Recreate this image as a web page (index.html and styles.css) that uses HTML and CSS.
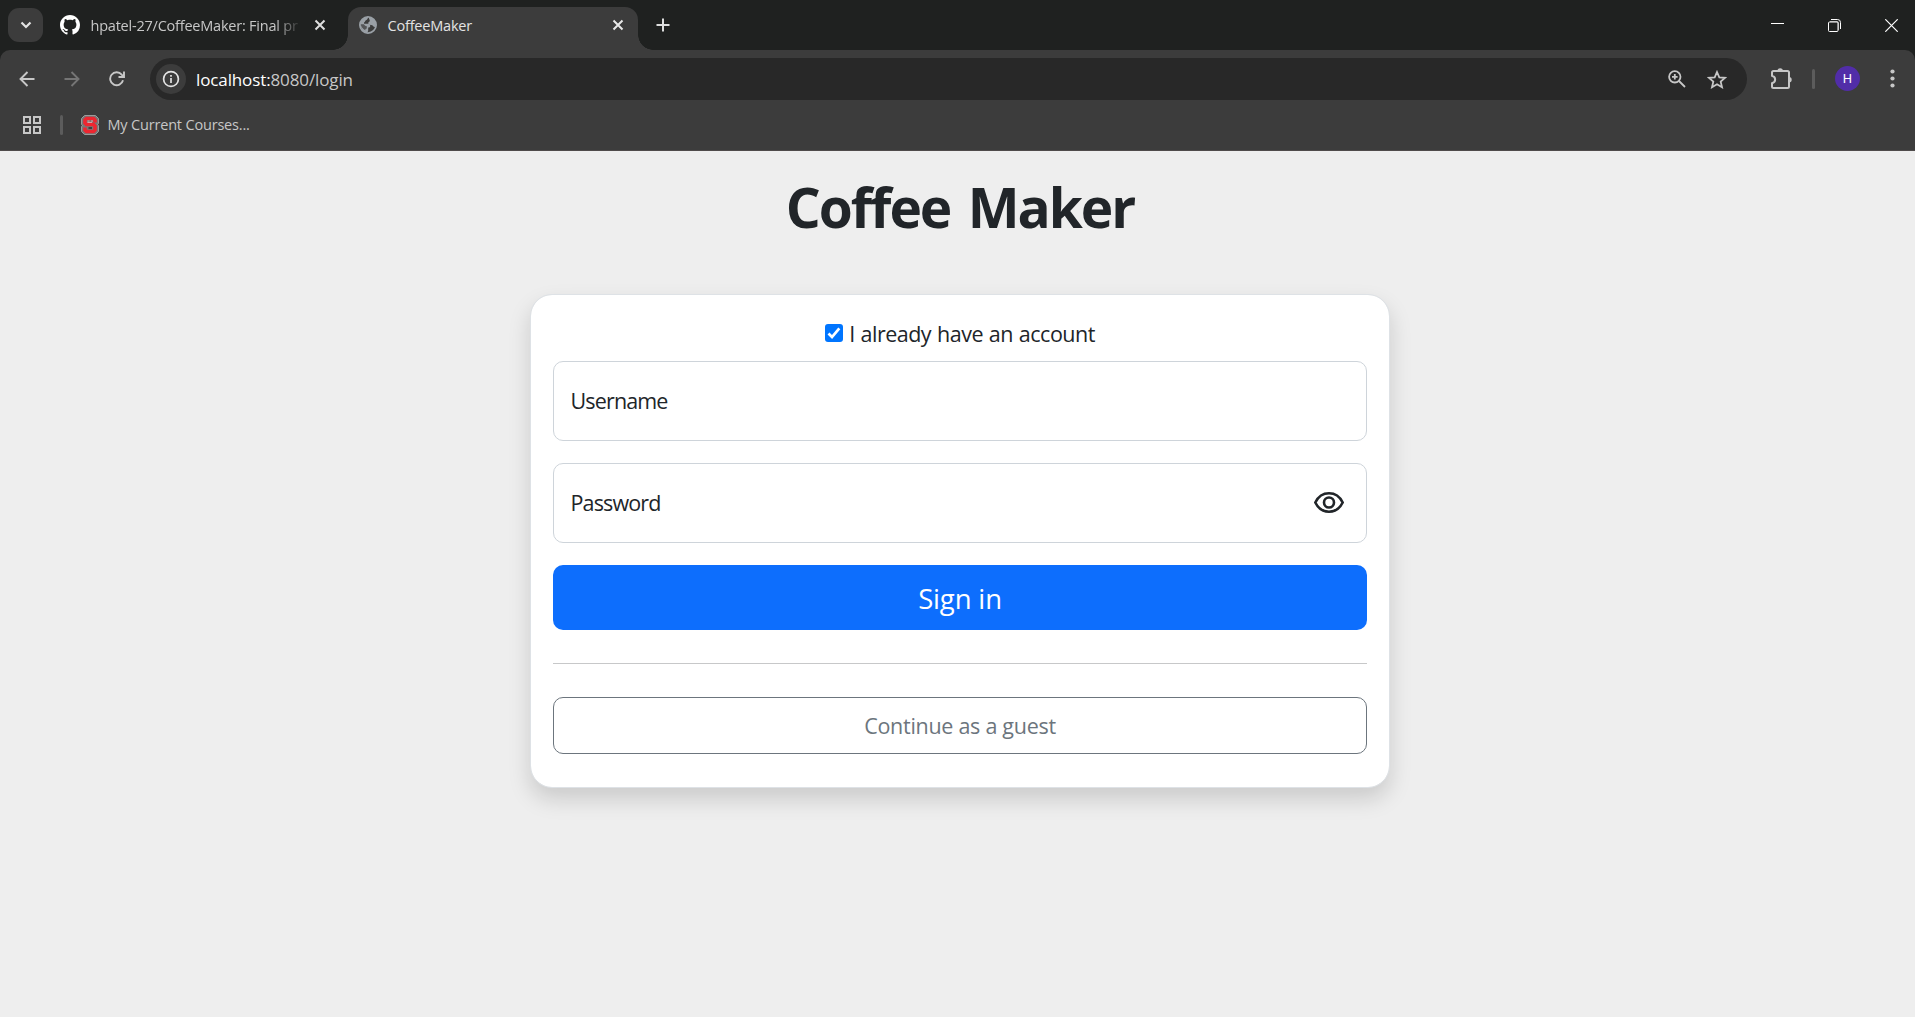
FILE: index.html
```html
<!DOCTYPE html>
<html lang="en">
<head>
<meta charset="utf-8">
<title>CoffeeMaker</title>
<link rel="stylesheet" href="styles.css">
</head>
<body>
<header class="browser">
  <div class="tabstrip">
    <button class="tab-search" aria-label="Search tabs"><svg width="12" height="12" viewBox="0 0 12 12"><path d="M1.5 3.5 6 8l4.500-4.500" fill="none" stroke="#e3e3e3" stroke-width="2.200"/></svg></button>
    <div class="tab">
      <svg class="favicon" width="20" height="20" viewBox="0 0 16 16" fill="#fff"><path d="M8 0C3.58 0 0 3.58 0 8c0 3.54 2.29 6.53 5.47 7.59.4.07.55-.17.55-.38 0-.19-.01-.82-.01-1.49-2.01.37-2.53-.49-2.69-.94-.09-.23-.48-.94-.82-1.13-.28-.15-.68-.52-.01-.53.63-.01 1.08.58 1.23.82.72 1.21 1.87.87 2.33.66.07-.52.28-.87.51-1.07-1.78-.2-3.64-.89-3.64-3.95 0-.87.31-1.59.82-2.15-.08-.2-.36-1.02.08-2.12 0 0 .67-.21 2.2.82.64-.18 1.32-.27 2-.27s1.36.09 2 .27c1.53-1.04 2.2-.82 2.2-.82.44 1.1.16 1.92.08 2.12.51.56.82 1.27.82 2.15 0 3.07-1.87 3.75-3.65 3.95.29.25.54.73.54 1.48 0 1.07-.01 1.93-.01 2.2 0 .21.15.46.55.38A8.01 8.01 0 0 0 16 8c0-4.42-3.58-8-8-8z"/></svg>
      <span class="tab-title tab-title-faded">hpatel-27/CoffeeMaker: Final pr</span>
      <svg class="tab-close" width="12" height="12" viewBox="0 0 12 12"><path d="m1.500 1.500 9 9m0-9-9 9" stroke="#dedede" stroke-width="2"/></svg>
    </div>
    <div class="tab tab-active">
      <svg class="favicon" width="18" height="18" viewBox="0 0 18 18"><circle cx="9" cy="9" r="8.100" fill="#3c3c3c" stroke="#9aa0a6" stroke-width="1.800"/><path d="M1.500 8.500C1.300 4.500 4.500 1 9 1c-.1 1.700-.6 2.900-2 3.200C5.800 4.500 6.500 6 5 6.500v1.300h4.500c1.200 0 1.700 1 1.700 2.200 0 1-.8 1.500-2 1.500v3c0 1.200-.8 2-2.200 2.200C4 15.500 1.700 12.500 1.500 8.500z" fill="#9aa0a6"/><path d="M1.800 8.300h3c1 1.300 1.500 2 3 2v2.200c-1.200 0-1.500.8-1.500 1.800-2.200-1.300-4.300-3.300-4.500-6z" fill="#3c3c3c" opacity=".75"/><path d="M10 1.200c4 .3 7 3.300 7 7.600-.2 1.300-.7 2.200-1.500 2.200-1.200 0-1.200-1.300-2.300-1.700-1.400-.4-3.700-.1-4-2C9 5.800 10.800 6 10.800 4.800 10.800 3.500 9.700 3 10 1.200z" fill="#9aa0a6"/></svg>
      <span class="tab-title">CoffeeMaker</span>
      <svg class="tab-close" width="12" height="12" viewBox="0 0 12 12"><path d="m1.500 1.500 9 9m0-9-9 9" stroke="#e8e8e8" stroke-width="2"/></svg>
    </div>
    <svg class="new-tab" width="14" height="14" viewBox="0 0 14 14"><path d="M7 .5v13M.5 7h13" stroke="#dedede" stroke-width="2"/></svg>
    <div class="window-controls">
      <svg width="13" height="13" viewBox="0 0 13 13"><path d="M0 4.500h13" stroke="#fff"/></svg>
      <svg width="13" height="13" viewBox="0 0 13 13" fill="none" stroke="#fff"><path d="M3 .5h6.500a3 3 0 0 1 3 3V10"/><path d="M2 2.500h7a1.500 1.500 0 0 1 1.500 1.500v7" stroke="#999"/><rect x=".5" y="3" width="9.500" height="9.500" rx="1"/></svg>
      <svg width="13" height="13" viewBox="0 0 13 13"><path d="m.3.3 12.400 12.400m0-12.400L.3 12.700" stroke="#fff" stroke-width="1.200"/></svg>
    </div>
  </div>
  <div class="toolbar">
    <div class="nav-row">
      <div class="nav-buttons">
        <svg width="16" height="16" viewBox="0 0 16 16"><path d="M15.500 8H2M8.500 1 1.500 8l7 7" fill="none" stroke="#c7c7c7" stroke-width="1.900"/></svg>
        <svg width="16" height="16" viewBox="0 0 16 16"><path d="M.5 8H14M7.500 1l7 7-7 7" fill="none" stroke="#757575" stroke-width="1.900"/></svg>
        <svg width="16" height="16" viewBox="0 0 16 16"><path d="M14 9.300A6.500 6.500 0 1 1 12.700 3.600L14.300 5.300M15 .5V6H9.500" fill="none" stroke="#c7c7c7" stroke-width="1.900"/></svg>
      </div>
      <div class="omnibox">
        <span class="site-info"><svg width="18" height="18" viewBox="0 0 18 18"><circle cx="9" cy="9" r="7.400" fill="none" stroke="#e3e3e3" stroke-width="1.700"/><path d="M9 8v5M9 5v1.700" stroke="#e3e3e3" stroke-width="1.700"/></svg></span>
        <span class="url"><span class="url-host">localhost:</span>8080/login</span>
        <svg class="zoom-icon" width="18" height="18" viewBox="0 0 18 18"><g fill="none" stroke="#c7c7c7" stroke-width="1.800"><circle cx="6.800" cy="6.800" r="5.700"/><path d="m11 11 6 6M6.800 4v5.600M4 6.800h5.600"/></g></svg>
        <svg class="star-icon" width="20" height="19" viewBox="0 0 20 19"><path d="m10 2 2.300 5.300 5.700.5-4.300 3.800 1.300 5.600-5-3-5 3 1.300-5.600L2 7.800l5.700-.5z" fill="none" stroke="#c7c7c7" stroke-width="1.800"/></svg>
      </div>
      <svg class="extensions" width="22" height="22" viewBox="0 0 22 22"><path d="M3.500 3h14A1.500 1.500 0 0 1 19 4.500v14a1.500 1.500 0 0 1-1.500 1.500h-14A1.500 1.500 0 0 1 2 18.500v-3.300c4.200-1 4.200-6.400 0-7.400V4.500A1.500 1.500 0 0 1 3.500 3z" fill="none" stroke="#c7c7c7" stroke-width="2"/><path d="M7.500 3a2.700 2.700 0 0 1 5.400 0zM19 9a2.700 2.700 0 0 1 0 5.400z" fill="#c7c7c7"/></svg>
      <span class="separator"></span>
      <span class="avatar">H</span>
      <svg class="menu-dots" width="5" height="19" viewBox="0 0 5 19" fill="#c7c7c7"><circle cx="2.500" cy="2.500" r="2.100"/><circle cx="2.500" cy="9.500" r="2.100"/><circle cx="2.500" cy="16.500" r="2.100"/></svg>
    </div>
    <div class="bookmarks">
      <svg width="18" height="18" viewBox="0 0 18 18" fill="none" stroke="#c7c7c7" stroke-width="2"><path d="M1 1h6v6H1zM11 1h6v6h-6zM1 11h6v6H1zM11 11h6v6h-6z"/></svg>
      <span class="separator"></span>
      <svg class="bookmark-logo" width="18" height="20" viewBox="0 0 18 20"><path d="M3.500.5h11l3 3v5l-1 .7 1 1.300v6l-3 3h-11l-3-3v-5l1-.7-1-1.300v-6z" fill="#777" stroke="#9b9b9b"/><path d="M14 7.500V5l-1.500-1.500h-7L4 5v3l1.500 1.500h7L14 11v4l-1.500 1.500h-7L4 15v-2.500" fill="none" stroke="#ee2630" stroke-width="3.600"/><path d="M6.500 6h2M10 6h2M6.500 7.500h4.500" stroke="#d9a0a3"/><path d="M7.500 13h3.500" stroke="#222" stroke-width="1.300"/></svg>
      <span class="bookmark-title">My Current Courses...</span>
    </div>
  </div>
</header>
<main class="page">
  <h1 class="title">Coffee Maker</h1>
  <form class="card">
    <label class="account-check"><span class="checkbox"><svg width="18" height="18" viewBox="0 0 18 18"><path d="m3.500 9.500 3.500 3.500 7.300-8.700" fill="none" stroke="#fff" stroke-width="2.700"/></svg></span><span class="account-text">I already have an account</span></label>
    <div class="field"><span class="field-label">Username</span></div>
    <div class="field"><span class="field-label">Password</span><svg class="eye" width="30" height="21" viewBox="0 0 30 21" fill="none" stroke="#212529" stroke-width="2.600"><path d="M1.300 10.500C4 5 9 1.300 15 1.300S26 5 28.700 10.500C26 16 21 19.700 15 19.700S4 16 1.300 10.500z" stroke-linejoin="round"/><circle cx="15" cy="10.500" r="5"/></svg></div>
    <button class="btn btn-primary" type="button"><span>Sign in</span></button>
    <hr class="rule">
    <button class="btn btn-guest" type="button"><span>Continue as a guest</span></button>
  </form>
</main>
</body>
</html>
```
FILE: styles.css
```css
* { box-sizing: border-box; }
body {
  margin: 0;
  height: 1017px;
  overflow: hidden;
  display: flex;
  flex-direction: column;
  background: #eee;
  color: #212529;
  font-family: "Open Sans", "Noto Sans", sans-serif;
}
svg { display: block; flex: none; }
button { font-family: inherit; padding: 0; border: 0; }

.browser { height: 151px; background: #1f2120; flex: none; }
.tabstrip { display: flex; height: 50px; padding-left: 8px; align-items: center; }
.tab-search {
  width: 35px; height: 34px; border-radius: 11px; background: #3c3c3c;
  display: flex; align-items: center; justify-content: center;
}
.tab {
  display: flex; align-items: center;
  width: 290px; height: 43px; padding: 0 14px 7px 11px;
  margin-top: 7px;
  position: relative;
}
.tab:not(.tab-active) { margin-left: 6px; width: 299px; padding-right: 22px; }
.tab-active { background: #3c3c3c; border-radius: 13px 13px 0 0; }
.tab-active::before, .tab-active::after {
  content: ""; position: absolute; bottom: 0; width: 15px; height: 15px;
}
.tab-active::before { left: -15px; background: radial-gradient(circle at 0 0, transparent 14.500px, #3c3c3c 15px); }
.tab-active::after { right: -15px; background: radial-gradient(circle at 100% 0, transparent 14.500px, #3c3c3c 15px); }
.tab-title { margin-left: 10.500px; padding-top: 2px; font-size: 14.500px; line-height: 20px; color: #e3e3e3; white-space: nowrap; letter-spacing: -.2px; }
.tab-title-faded {
  color: #c7c7c7; letter-spacing: -.22px;
  mask-image: linear-gradient(90deg, #000 184px, transparent 211px);
}
.tab-close { margin-left: auto; }
.new-tab { margin-left: 18px; }
.window-controls { display: flex; gap: 44px; margin-left: auto; padding-right: 17px; }

.toolbar { height: 101px; background: #3c3c3c; border-radius: 10px 10px 0 0; border-bottom: 1px solid #4f4b4b; }
.nav-row { display: flex; height: 50px; padding: 7px 20px 0 0; align-items: center; }
.nav-buttons { display: flex; gap: 29px; width: 150px; padding-left: 19px; }
.omnibox { display: flex; align-items: center; width: 1597px; height: 42px; margin-top: 1px; padding: 0 20px 0 6px; border-radius: 21px; background: #282828; }
.site-info { display: flex; align-items: center; justify-content: center; width: 30px; height: 30px; border-radius: 50%; background: #3c3c3c; }
.url { margin-left: 10px; padding-top: 2px; font-size: 17px; line-height: 24px; color: #c7c7c7; letter-spacing: -.12px; }
.url-host { color: #fff; }
.zoom-icon { margin-left: auto; }
.star-icon { margin-left: 21px; }
.extensions { margin-left: 23px; }
.separator { width: 3px; height: 20px; border-radius: 2px; background: #5c5c5c; }
.nav-row .separator { margin-left: 20px; }
.avatar { margin-left: 20px; width: 25px; height: 25px; border-radius: 50%; background: #512da8; color: #fff; font: 13px/25px Roboto, sans-serif; text-align: center; }
.menu-dots { margin-left: auto; }
.bookmarks { display: flex; align-items: center; height: 50px; padding-left: 23px; }
.bookmarks .separator { margin-left: 19px; }
.bookmark-logo { margin-left: 18px; }
.bookmark-title { margin-left: 8.500px; font-size: 14.500px; line-height: 20px; color: #c7c7c7; letter-spacing: -.18px; }

.page { flex: 1; display: flex; flex-direction: column; align-items: center; padding: 22px 0 0 5px; }
.title { margin: 0; font-size: 55px; font-weight: 700; line-height: 67px; letter-spacing: -2px; word-spacing: 5px; }
.card {
  display: flex; flex-direction: column;
  width: 860px; height: 494px; margin-top: 54px; padding: 22px;
  background: #fff; background-clip: padding-box;
  border: 1px solid #dee2e6; border-radius: 22px;
  box-shadow: 0 11px 22px rgba(0, 0, 0, .15);
}
.account-check { display: flex; justify-content: center; height: 33px; font-size: 21.500px; line-height: 33px; letter-spacing: -.5px; word-spacing: .8px; }
.checkbox { width: 18px; height: 18px; margin: 7px 6px 0 0; border-radius: 3px; background: #0075ff; }
.field {
  display: flex; align-items: center; height: 80px; margin-bottom: 22px; padding: 0 22px 2px 16.500px;
  border: 1px solid #ced4da; border-radius: 10px; font-size: 21.500px; line-height: 33px; letter-spacing: -.85px;
}
.account-check + .field { margin-top: 11px; }
.eye { margin-left: auto; }
.btn { width: 100%; border-radius: 10px; flex: none; }
.btn-primary { height: 65px; padding-top: 1px; background: #0d6efd; color: #fff; font-size: 27.500px; letter-spacing: -.15px; }
.rule { width: 100%; height: 1px; margin: 33px 0; border: 0; background: #c7c8c9; flex: none; }
.btn-guest { height: 57px; border: 1px solid #6c757d; background: #fff; color: #6c757d; font-size: 21.500px; letter-spacing: -.28px; }
```
